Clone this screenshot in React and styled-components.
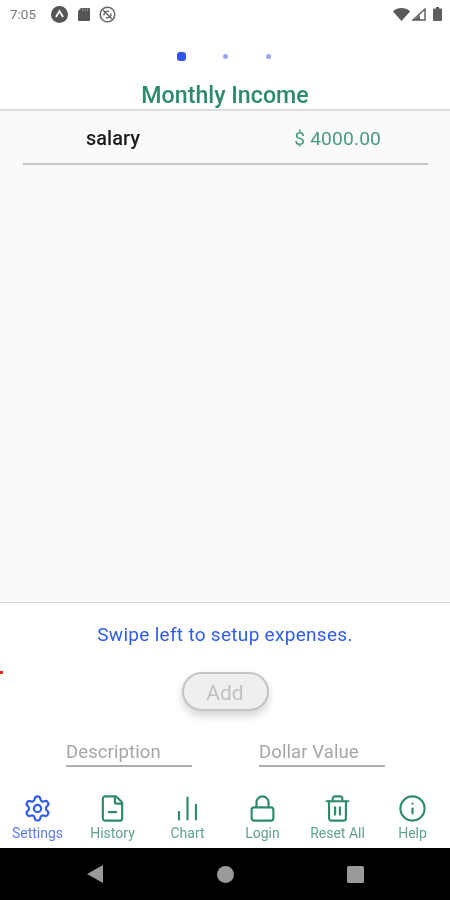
import React from "react";
import styled, { createGlobalStyle } from "styled-components";
import { Settings, FileMinus, ChartNoAxesColumn, Lock, Trash2, Info } from "lucide-react";

const Global = createGlobalStyle`
  html, body { margin: 0; padding: 0; background: #fff; }
  * { box-sizing: border-box; }
`;
const Page = styled.div`
  position: relative;
  width: 450px; height: 900px; display: flex; flex-direction: column; overflow: hidden;
  font-family: Roboto, "Liberation Sans", sans-serif; background: #fff; filter: blur(0.5px);
`;
const StatusBar = styled.div`
  height: 30px; flex: none; padding: 0 8px 2px 10px; display: flex; align-items: center; justify-content: space-between;
`;
const StatusGroup = styled.div`display: flex; align-items: center;`;
const Clock = styled.span`font-size: 13.5px; color: #757575; width: 41px;`;
const Dots = styled.div`
  height: 52px; flex: none; display: flex; align-items: center; justify-content: center; gap: 34.5px;
`;
const Dot = styled.span`
  width: ${p => (p.$active ? 9 : 5)}px; height: ${p => (p.$active ? 9 : 5)}px;
  margin: 0 ${p => (p.$active ? 0 : 2)}px;
  border-radius: 3px;
  background: ${p => (p.$active ? "#3355ee" : "#9aa6f5")};
`;
const Title = styled.h1`
  margin: 0; height: 27px; flex: none; text-align: center; font-size: 23.2px; line-height: 26px; font-weight: 500; color: #2e8b6a;
`;
const List = styled.div`
  flex: 1; background: #fafafa; border-top: 2px solid #dcdcdc; border-bottom: 1px solid #d6d6d6; padding: 0 22px 0 23px;
`;
const Row = styled.div`
  height: 54px; display: flex; align-items: center; border-bottom: 2px solid #c6c6c6; padding: 2px 47px 0 63px; justify-content: space-between;
`;
const Name = styled.span`font-size: 20px; font-weight: 500; color: #1c1c1c;`;
const Amount = styled.span`font-size: 19.2px; color: #4a9a80; letter-spacing: 0.15px;`;
const Form = styled.div`
  height: 245px; flex: none; background: #fff; display: flex; flex-direction: column; align-items: center;
`;
const Hint = styled.div`margin-top: 21px; font-size: 19px; line-height: 22px; letter-spacing: .3px; color: #2f5cf0;`;
const AddButton = styled.div`
  margin-top: 26px; width: 87px; height: 39px; border-radius: 20px; border: 2px solid #c4c4c4; background: #efefef; padding-top: 2px;
  color: #c2c2c2; font-size: 21px; display: flex; align-items: center; justify-content: center;
  box-shadow: 0 5px 8px rgba(0,0,0,.17);
`;
const Inputs = styled.div`
  margin-top: 29px; width: 100%; padding-left: 66px; display: flex; gap: 67px;
`;
const Field = styled.div`
  width: 126px; height: 27px; border-bottom: 2px solid #aeaeae; font-size: 18.5px; line-height: 24px; color: #a6a6a6; letter-spacing: .1px;
`;
const Tabs = styled.nav`
  flex: none; margin-top: 26px; width: 100%; display: grid; grid-template-columns: repeat(6, 75px);
`;
const Tab = styled.div`
  display: flex; flex-direction: column; align-items: center; color: ${p => (p.$active ? "#2f5cf0" : "#2e8b6a")};
`;
const IconBox = styled.div`height: 30px; display: flex; align-items: center; justify-content: center;`;
const TabLabel = styled.span`
  margin-top: 2px; font-size: 14px; line-height: 16px; color: ${p => (p.$active ? "#5f7df0" : "#5fa28a")};
`;
const NavBar = styled.div`
  height: 52px; flex: none; background: #000; display: grid; grid-template-columns: repeat(3, 130px); justify-content: center; align-items: center; justify-items: center;
`;
const Marker = styled.span`
  position: absolute; left: 0; top: 671px; width: 3px; height: 3px; background: #f02010;
`;

const Wifi = () => <svg width="17" height="13" viewBox="0 0 17 13"><path d="M0 3.4C4.8-1 12.2-1 17 3.4L8.5 13z" fill="#5a5a5a"/></svg>;
const Signal = () => <svg width="14" height="13" viewBox="0 0 14 13" style={{ marginLeft: 2 }}><path d="M13 1v11H1z" fill="none" stroke="#5a5a5a" strokeWidth="1.4"/><path d="M8 7v5H2.5z" fill="#5a5a5a"/></svg>;
const Battery = () => <svg width="9" height="14" viewBox="0 0 9 14" style={{ marginLeft: 7 }}><path d="M3 0h3v1.5h2a1 1 0 0 1 1 1V13a1 1 0 0 1-1 1H1a1 1 0 0 1-1-1V2.500a1 1 0 0 1 1-1h2z" fill="#5f5f5f"/></svg>;
const AppBadge = () => <svg width="17" height="17" viewBox="0 0 17 17"><circle cx="8.5" cy="8.500" r="8.500" fill="#555"/><path d="M5 11l3.500-6 3.500 6" fill="none" stroke="#fff" strokeWidth="1.800"/></svg>;
const SdCard = () => <svg width="12" height="13" viewBox="0 0 12 13" style={{ marginLeft: 10 }}><path d="M3 0h8a1 1 0 0 1 1 1v11a1 1 0 0 1-1 1H1a1 1 0 0 1-1-1V3z" fill="#555"/><path d="M4.500.500v2.500M7 .500v2.500M9.500.500v2.500" stroke="#aaa" strokeWidth=".7"/></svg>;
const SyncOff = () => <svg width="17" height="17" viewBox="0 0 17 17" style={{ marginLeft: 9 }}><circle cx="8.500" cy="8.500" r="7.300" fill="none" stroke="#666" strokeWidth="1.500"/><path d="M5 9.500a3.600 3.600 0 0 1 5-4M12 7.500a3.600 3.600 0 0 1-5 4" fill="none" stroke="#666" strokeWidth="1.400"/><path d="M4 4l9 9" stroke="#666" strokeWidth="1.400"/></svg>;
const Back = () => <svg width="16" height="18" viewBox="0 0 16 18"><path d="M16 0v18L0 9z" fill="#9a9a9a"/></svg>;
const Home = () => <svg width="17" height="17" viewBox="0 0 17 17"><circle cx="8.500" cy="8.500" r="8.500" fill="#9a9a9a"/></svg>;
const Recent = () => <svg width="17" height="17" viewBox="0 0 17 17"><rect width="17" height="17" rx="1.500" fill="#9a9a9a"/></svg>;

const tabs = [
  ["Settings", Settings, true],
  ["History", FileMinus],
  ["Chart", ChartNoAxesColumn],
  ["Login", Lock],
  ["Reset All", Trash2],
  ["Help", Info],
];

export default function App() {
  return (
    <Page>
      <Global />
      <StatusBar>
        <StatusGroup><Clock>7:05</Clock><AppBadge /><SdCard /><SyncOff /></StatusGroup>
        <StatusGroup><Wifi /><Signal /><Battery /></StatusGroup>
      </StatusBar>
      <Dots><Dot $active /><Dot /><Dot /></Dots>
      <Title>Monthly Income</Title>
      <List>
        <Row><Name>salary</Name><Amount>$ 4000.00</Amount></Row>
      </List>
      <Form>
        <Hint>Swipe left to setup expenses.</Hint>
        <AddButton>Add</AddButton>
        <Inputs><Field>Description</Field><Field>Dollar Value</Field></Inputs>
        <Tabs>
          {tabs.map(([label, Icon, active]) => (
            <Tab key={label} $active={active}>
              <IconBox><Icon size={29} strokeWidth={1.8} /></IconBox>
              <TabLabel $active={active}>{label}</TabLabel>
            </Tab>
          ))}
        </Tabs>
      </Form>
      <NavBar><Back /><Home /><Recent /></NavBar>
      <Marker />
    </Page>
  );
}
